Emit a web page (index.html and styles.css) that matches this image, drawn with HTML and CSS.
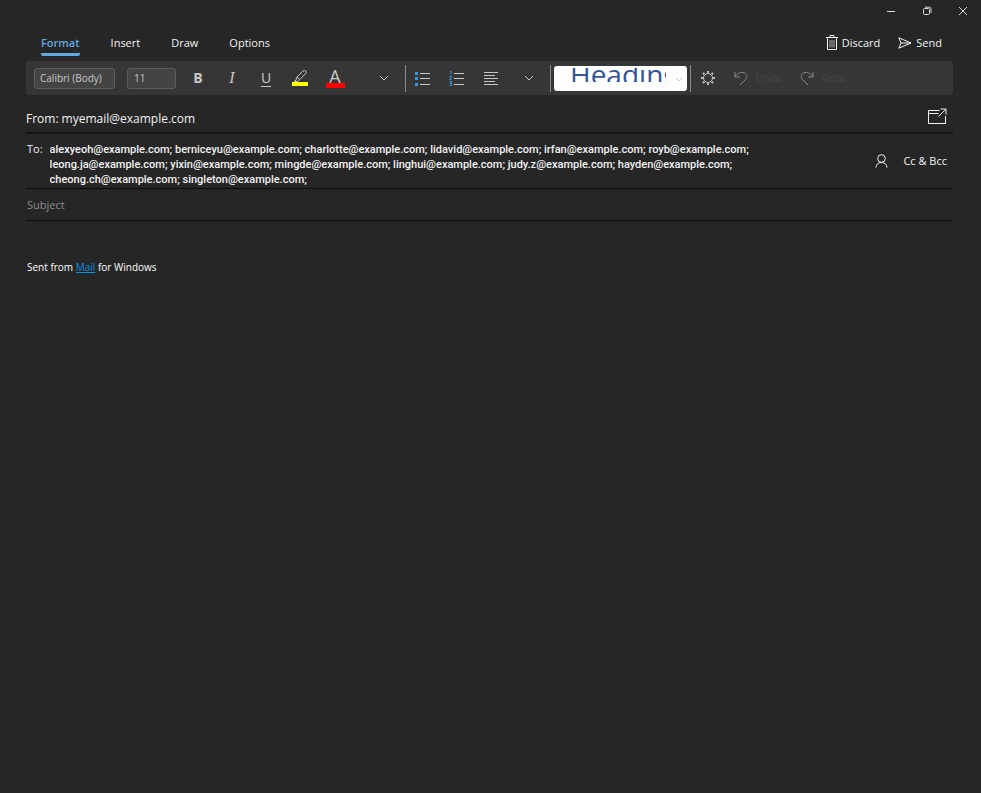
FILE: index.html
```
<!DOCTYPE html>
<html lang="en">
<head>
<meta charset="utf-8">
<title>Mail</title>
<link rel="stylesheet" href="styles.css">
</head>
<body>
<div class="window">
  <div class="titlebar">
    <button class="caption" aria-label="Minimize"><svg width="10" height="10" viewBox="0 0 10 10"><path d="M1 5.500h8"/></svg></button>
    <button class="caption" aria-label="Restore"><svg width="10" height="10" viewBox="0 0 10 10"><rect x="1.5" y="2.5" width="6" height="6" rx="1"/><path d="M3 1.200h4.500a1.500 1.500 0 0 1 1.500 1.500V7"/></svg></button>
    <button class="caption" aria-label="Close"><svg width="10" height="10" viewBox="0 0 10 10"><path d="M1 1l8 8M9 1l-8 8"/></svg></button>
  </div>

  <header class="commands">
    <nav class="tabs">
      <button class="tab tab-active">Format</button>
      <button class="tab">Insert</button>
      <button class="tab">Draw</button>
      <button class="tab">Options</button>
    </nav>
    <div class="actions">
      <button class="action"><svg width="12" height="15" viewBox="0 0 12 15"><path d="M0 2.500h12M4 2.500v-2h4v2M1.500 2.500v12h9v-12"/><path class="thin" d="M4 5v7.500M6 5v7.500M8 5v7.500"/></svg>Discard</button>
      <button class="action"><svg width="14" height="12" viewBox="0 0 14 12"><path d="M.8.800L13 6 .800 11.200 3 6zM3 6h10"/></svg>Send</button>
    </div>
  </header>

  <div class="toolbar">
    <select class="field font-name" aria-label="Font"><option>Calibri (Body)</option></select>
    <select class="field font-size" aria-label="Font size"><option>11</option></select>
    <div class="group">
      <button class="tool bold" aria-label="Bold">B</button>
      <button class="tool italic" aria-label="Italic">I</button>
      <button class="tool underline" aria-label="Underline">U</button>
      <button class="tool" aria-label="Highlight"><svg width="16" height="18" viewBox="0 0 16 18"><path d="M5 8l6-6q1.500-1.200 2.800 0 1 1.300-.2 2.700l-6 6zM5 8q-1 1.500-.8 3l-2 1.500h3.600l1.600-1.700"/><path class="yellow" d="M0 13h16v4H0z"/></svg></button>
      <button class="tool color" aria-label="Font colour"><span class="color-letter">A</span><span class="color-bar"></span></button>
      <button class="tool more" aria-label="More font formatting"><svg width="10" height="6" viewBox="0 0 10 6"><path d="M1 1l4 4 4-4"/></svg></button>
    </div>
    <div class="group divided">
      <button class="tool" aria-label="Bullets"><svg width="16" height="15" viewBox="0 0 16 15"><path class="blue" d="M0 1h3v3H0zM0 6h3v3H0zM0 12h3v3H0z"/><path d="M5 2.500h10M5 7.500h10M5 13.500h10"/></svg></button>
      <button class="tool" aria-label="Numbering"><svg width="16" height="16" viewBox="0 0 16 16"><path class="blue-line" d="M1 1.500h1v3M.5 6.500h2v1.200l-2 1.600h2M.5 11.500h2v4h-2M1 13.500h1.500"/><path d="M5 3.500h10M5 8.500h10M5 14.500h10"/></svg></button>
      <button class="tool" aria-label="Alignment"><svg width="16" height="15" viewBox="0 0 16 15"><path d="M1 1.500h14M1 4.500h11M1 7.500h14M1 10.500h11M1 13.500h14"/></svg></button>
      <button class="tool more-para" aria-label="More paragraph formatting"><svg width="10" height="6" viewBox="0 0 10 6"><path d="M1 1l4 4 4-4"/></svg></button>
    </div>
    <div class="group divided styles">
      <div class="style-box">
        <div class="style-preview">
          <select class="style-select" aria-label="Style"><option>Heading 1</option></select>
        </div>
        <svg class="style-arrow" width="8" height="6" viewBox="0 0 8 6"><path d="M1 1l3 3 3-3"/></svg>
      </div>
    </div>
    <div class="group divided">
      <button class="tool" aria-label="Editor"><svg width="16" height="16" viewBox="0 0 16 16"><circle cx="8" cy="8" r="4.500"/><path class="teeth" d="M8 1v1.800M8 13.200V15M1 8h1.800M13.200 8H15M3 3l1.300 1.300M11.700 11.700L13 13M13 3l-1.300 1.300M4.300 11.700L3 13"/></svg></button>
      <button class="history" disabled><svg width="14" height="15" viewBox="0 0 14 15"><path d="M1 1v5h5M1 6c2-3 4.500-5 8-4.500 4 .8 5 4.500 2.500 7L6 14"/></svg>Undo</button>
      <button class="history" disabled><svg width="14" height="15" viewBox="0 0 14 15"><path d="M13 1v5H8M13 6c-2-3-4.500-5-8-4.500C1 2.300 0 6 2.500 8.500L8 14"/></svg>Redo</button>
    </div>
  </div>

  <main class="message">
    <div class="row from">
      <span class="from-label">From:</span>
      <span class="address">myemail@example.com</span>
      <button class="icon-button" aria-label="Open in new window"><svg width="19" height="17" viewBox="0 0 19 17"><path d="M11.500 2.500H.5v13h17V8M.5 5.500h10M10.500 8.500l7-7M12.500 1h5.500v5.500"/></svg></button>
    </div>
    <div class="row to">
      <label for="to">To:</label>
      <textarea id="to" rows="3" spellcheck="false">alexyeoh@example.com; berniceyu@example.com; charlotte@example.com; lidavid@example.com; irfan@example.com; royb@example.com;
leong.ja@example.com; yixin@example.com; mingde@example.com; linghui@example.com; judy.z@example.com; hayden@example.com;
cheong.ch@example.com; singleton@example.com;</textarea>
      <div class="to-actions">
        <button class="icon-button" aria-label="Choose contacts"><svg width="13" height="14" viewBox="0 0 13 14"><circle cx="6.500" cy="4.500" r="3.800"/><path d="M1 13.500c.3-3.200 2-5 5.500-5s5.200 1.800 5.500 5"/></svg></button>
        <button class="cc">Cc &amp; Bcc</button>
      </div>
    </div>
    <div class="row subject">
      <input type="text" aria-label="Subject" placeholder="Subject">
    </div>
    <div class="body" contenteditable="true" role="textbox" aria-label="Message">Sent from <a href="#">Mail</a> for Windows</div>
  </main>
</div>
</body>
</html>
```
FILE: styles.css
```
* { box-sizing: border-box; }
body {
  margin: 0;
  background: #262626;
  color: #f2f2f2;
  font: 11px/16px "Open Sans", "Noto Sans", sans-serif;
}
button, input, select, textarea {
  margin: 0;
  padding: 0;
  border: 0;
  background: none;
  color: inherit;
  font: inherit;
  appearance: none;
}
svg { display: block; flex: none; fill: none; stroke: currentColor; stroke-width: 1; }
.window { display: flex; flex-direction: column; min-height: 100vh; }

.titlebar { display: flex; justify-content: flex-end; height: 22px; }
.caption { display: grid; place-items: center; width: 36px; color: #d8d8d8; }

.commands {
  display: flex;
  justify-content: space-between;
  height: 39px;
  padding: 2px 39px 0 41px;
}
.tabs { display: flex; gap: 31px; align-items: center; }
.tab { padding: 5px 0 2px; border-bottom: 3px solid transparent; border-radius: 2px; }
.tab-active { color: #62a8e5; border-bottom-color: #62a8e5; font-weight: 600; }
.actions { display: flex; gap: 18px; align-items: center; }
.action { display: flex; gap: 4px; align-items: center; }
.thin { stroke: #aaa; }

.toolbar {
  display: flex;
  align-items: center;
  height: 34px;
  margin: 0 28px 0 26px;
  padding: 0 8px;
  border-radius: 3px;
  background: #363636;
  color: #c8c8c8;
}
.field {
  height: 21px;
  padding: 0 6px;
  border: 1px solid #5c5c5c;
  border-radius: 3px;
  background: #444;
  font-size: 10px;
}
.font-name { width: 81px; margin-right: 12px; padding: 0 5px; }
.font-size { width: 49px; margin-right: 5px; }
.group { display: flex; align-items: center; height: 27px; }
.divided { border-left: 1px solid #8a8a8a; }
.tool { display: grid; place-items: center; width: 34px; height: 27px; font-size: 14px; }
.bold { font-weight: 700; }
.italic { font-family: "Liberation Serif", serif; font-style: italic; font-size: 16px; }
.underline { text-decoration: underline; text-underline-offset: 3px; }
.more { margin: 0 4px 0 16px; }
.more-para { margin: 0 4px; }
.yellow { fill: #ff0; stroke: none; }
.blue { fill: #3a96dd; stroke: none; }
.blue-line { stroke: #3a96dd; }
.teeth { stroke-width: 2; }
.color { align-content: center; width: 36px; }
.color + .more { margin-left: 14px; }
.color-letter { font-size: 18px; line-height: 14px; }
.color-bar { width: 19px; height: 5px; background: #f00; }

.styles { padding: 0 3px 0 3px; }
.style-box {
  position: relative;
  width: 133px;
  height: 25px;
  padding: 2px 0;
  border-radius: 3px;
  background: #fff;
}
.style-preview { height: 21px; overflow: hidden; }
.style-select {
  display: block;
  width: 100%;
  height: 40px;
  margin-top: -14px;
  padding: 0 21px 0 16px;
  color: #2f5597;
  font-size: 28px;
}
.style-arrow { position: absolute; right: 4px; top: 11px; color: #ccc; }
.history { display: flex; gap: 8px; align-items: center; margin: 0 9px; color: #484848; font-size: 10px; }
.history svg { color: #8a8a8a; }

.message { flex: 1; padding: 0 28px 0 26px; }
.row { display: flex; border-bottom: 1px solid #0b0b0b; }
.from { align-items: flex-end; height: 39px; padding: 0 6px 5px 0; border-bottom: 2px solid #141414; font-size: 12px; }
.from-label { margin-right: 3px; }
.address { flex: 1; }
.icon-button { display: block; }
.from .icon-button { margin-bottom: 2px; }
.to { padding: 7px 6px 0 1px; align-items: flex-start; }
.to textarea {
  width: 720px;
  height: 47px;
  margin-left: 7px;
  padding-top: 1px;
  resize: none;
  overflow: hidden;
  font: 500 11px/15px Roboto, "Open Sans", sans-serif;
  outline: 0;
}
.to-actions { display: flex; gap: 15px; align-items: center; margin: 12px 0 0 auto; }
.subject input { width: 100%; height: 31px; padding: 0 1px; outline: 0; }
.subject input::placeholder { color: #8c8c8c; }
.body { padding: 38px 1px; outline: 0; color: #fff; font-size: 10px; font-weight: 500; }
.body a { color: #0a95e0; }
```
